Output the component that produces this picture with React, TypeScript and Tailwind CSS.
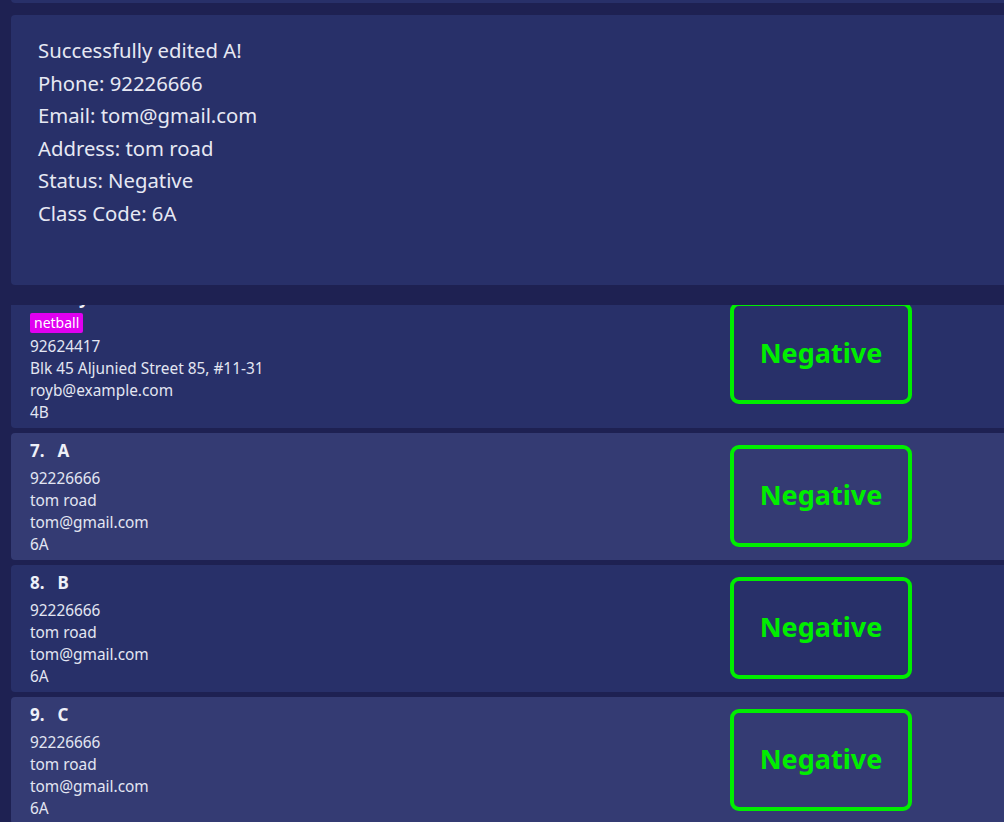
import React from "react"

interface Person {
  index: number
  name: string
  phone: string
  address: string
  email: string
  classCode: string
  tags?: string[]
  status: string
}

const people: Person[] = [
  {
    index: 6,
    name: "Roy Balakrishnan",
    phone: "92624417",
    address: "Blk 45 Aljunied Street 85, #11-31",
    email: "royb@example.com",
    classCode: "4B",
    tags: ["netball"],
    status: "Negative",
  },
  { index: 7, name: "A", phone: "92226666", address: "tom road", email: "tom@gmail.com", classCode: "6A", status: "Negative" },
  { index: 8, name: "B", phone: "92226666", address: "tom road", email: "tom@gmail.com", classCode: "6A", status: "Negative" },
  { index: 9, name: "C", phone: "92226666", address: "tom road", email: "tom@gmail.com", classCode: "6A", status: "Negative" },
]

const resultLines = [
  "Successfully edited A!",
  "Phone: 92226666",
  "Email: tom@gmail.com",
  "Address: tom road",
  "Status: Negative",
  "Class Code: 6A",
]

function PersonCard({ person, light }: { person: Person; light: boolean }) {
  return (
    <div
      className={`flex items-center rounded-[4px] pt-[5px] pb-[4px] ${light ? "bg-[#343b73]" : "bg-[#283069]"}`}
    >
      <div className="w-[719px] pl-[19px] text-[#e3e6f2]">
        <div className="text-[17px] font-bold leading-[26px] text-[#eef0f8]">
          {person.index}.<span className="ml-[13px]">{person.name}</span>
        </div>
        {person.tags && (
          <div className="mt-[2px] mb-[3px] flex gap-1">
            {person.tags.map((t) => (
              <span key={t} className="h-[20px] rounded-[2px] bg-[#e000f0] px-[4px] text-[14px] leading-[20px] text-white">
                {t}
              </span>
            ))}
          </div>
        )}
        <div className={`${person.tags ? "" : "mt-[4px]"} text-[15.4px] leading-[22px]`}>
          <div>{person.phone}</div>
          <div>{person.address}</div>
          <div>{person.email}</div>
          <div>{person.classCode}</div>
        </div>
      </div>
      {/* Status badge */}
      <div className="-mt-[3px] flex h-[102px] w-[182px] items-center justify-center rounded-[9px] border-4 border-[#00ee00]">
        <span className="text-[27px] font-bold text-[#00ee00]">{person.status}</span>
      </div>
    </div>
  )
}

export default function App() {
  return (
    <div
      className="h-[822px] w-[1004px] overflow-hidden bg-[#1e2152]"
      style={{ fontFamily: '"Noto Sans", "Open Sans", sans-serif' }}
    >
      <div className="w-[1030px] pl-[11px]">
        {/* Command box (scrolled off) */}
        <div className="-mt-[17px] h-[20px] rounded-[4px] bg-[#283069]" />

        {/* Result display */}
        <div className="mt-[12px] h-[270px] rounded-[4px] bg-[#283069] pl-[27px] pt-[19px] text-[20.3px] leading-[32.5px] text-[#e6e8f3]">
          {resultLines.map((l) => (
            <div key={l}>{l}</div>
          ))}
        </div>

        {/* Person list, scrolled part-way */}
        <div className="mt-[20px] h-[517px] overflow-hidden">
          <div className="-mt-[25px] flex flex-col gap-[5px]">
            {people.map((p, i) => (
              <PersonCard key={p.index} person={p} light={i % 2 === 1} />
            ))}
          </div>
        </div>
      </div>
    </div>
  )
}
